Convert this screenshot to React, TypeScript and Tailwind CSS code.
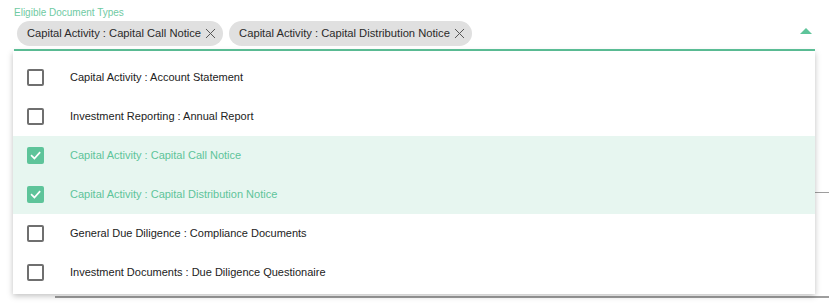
import { X } from 'lucide-react';

const options = [
  { label: 'Capital Activity : Account Statement', checked: false },
  { label: 'Investment Reporting : Annual Report', checked: false },
  { label: 'Capital Activity : Capital Call Notice', checked: true },
  { label: 'Capital Activity : Capital Distribution Notice', checked: true },
  { label: 'General Due Diligence : Compliance Documents', checked: false },
  { label: 'Investment Documents : Due Diligence Questionaire', checked: false },
];

const chips = ['Capital Activity : Capital Call Notice', 'Capital Activity : Capital Distribution Notice'];

function Checkbox({ checked }: { checked: boolean }) {
  if (checked) {
    return (
      <div className="w-[17px] h-[17px] rounded-[2px] bg-[#5ec49a] flex items-center justify-center">
        <svg className="w-[13px] h-[13px]" viewBox="0 0 24 24" fill="none" stroke="white" strokeWidth="3.2" strokeLinecap="square">
          <polyline points="5 12.5 10 17.5 19.5 7" />
        </svg>
      </div>
    );
  }
  return <div className="w-[17px] h-[17px] rounded-[2px] border-2 border-[#6f6f6f]" />;
}

export default function App() {
  return (
    <div className="relative w-[829px] h-[303px] bg-white overflow-hidden" style={{ fontFamily: '"Liberation Sans", Arial, sans-serif' }}>
      {/* Field */}
      <div className="pl-[14px] pr-[14px] pt-[7px]">
        <div className="text-[10px] leading-[12px] text-[#6fcaa3]">Eligible Document Types</div>
        <div className="flex items-center pl-[3px] pt-[2px] pb-[3px] gap-[6px]">
          {chips.map((c) => (
            <div key={c} className="h-[25px] rounded-full bg-[#e0e0e0] flex items-center pl-[10px] pr-[4px] text-[11.2px] text-[#2a2a2a]">
              <span>{c}</span>
              <X className="w-[17px] h-[17px] ml-px text-[#555]" strokeWidth={1.4} />
            </div>
          ))}
          <div className="flex-1" />
          <svg className="w-[12px] h-[6px] mr-[3px] mb-[5px]" viewBox="0 0 12 6">
            <polygon points="0,6 6,0 12,6" fill="#5ec49a" />
          </svg>
        </div>
        <div className="h-[2px] bg-[#5ec49a]" />
      </div>

      {/* Rest of the form behind the menu */}
      <div className="mt-[141px] ml-[14px] h-px bg-[#9e9e9e]" />
      <div className="mt-[103px] ml-[55px] h-[2px] bg-[#9e9e9e]" />

      {/* Dropdown menu */}
      <div className="absolute left-[13px] top-[51px] w-[802px] h-[243px] bg-white pt-[7px] shadow-[0_2px_6px_rgba(0,0,0,0.25)] overflow-hidden">
        {options.map((o) => (
          <div key={o.label} className={`h-[39px] flex items-center pl-[14px] ${o.checked ? 'bg-[#e7f6f0]' : ''}`}>
            <Checkbox checked={o.checked} />
            <span className={`ml-[26px] text-[11px] ${o.checked ? 'text-[#5ec49a]' : 'text-[#222]'}`}>{o.label}</span>
          </div>
        ))}
      </div>
    </div>
  );
}
